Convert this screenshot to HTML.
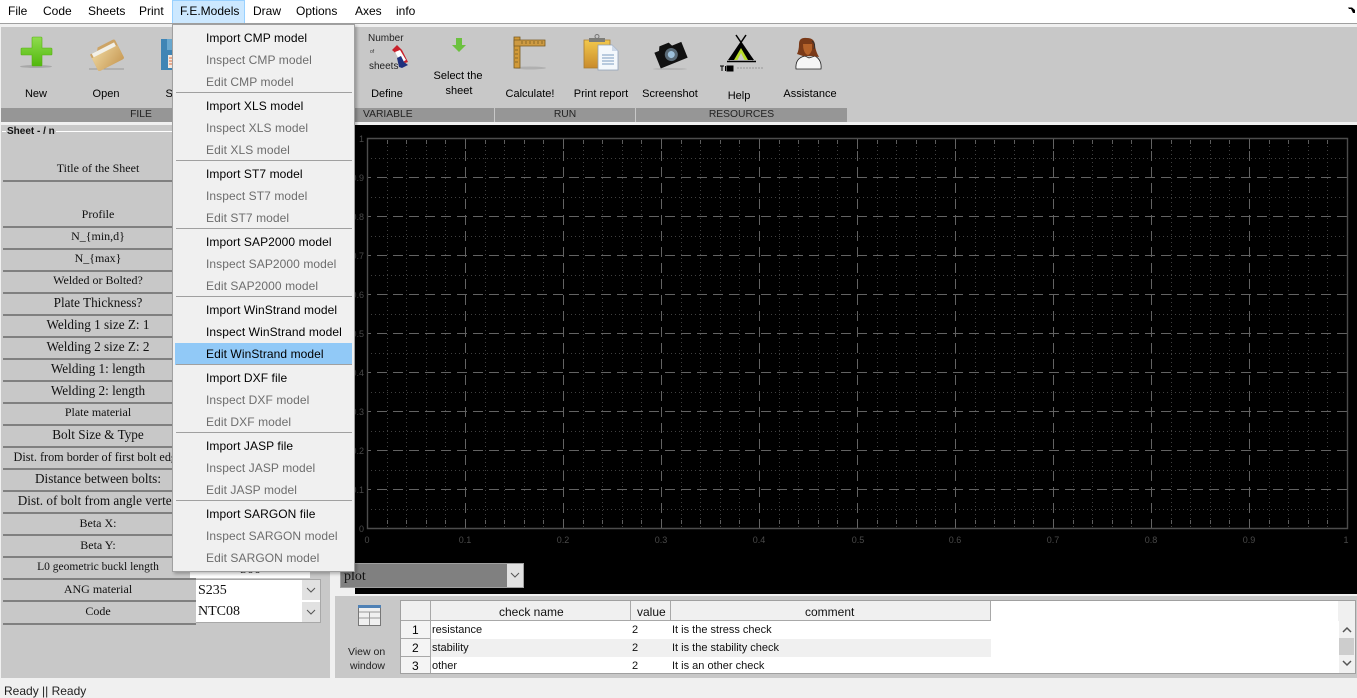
<!DOCTYPE html>
<html><head><meta charset="utf-8"><style>
html,body{margin:0;padding:0;width:1357px;height:697px;overflow:hidden;background:#f0f0f0;font-family:"Liberation Sans",sans-serif;color:#000}
div,span{position:absolute;white-space:nowrap}
.m{top:3px;font-size:12px;line-height:16px}
.t{font-size:11px;line-height:14px;transform:translateX(-50%);top:87px}
.b{font-size:10.3px;line-height:14px;top:108px;text-align:center;background:#969696;height:14px;color:#222}
.l{left:3px;width:190px;text-align:center;font:12px/14px "Liberation Serif",serif;color:#111}
.w{font-size:13.2px}
.u{left:3px;width:193px;height:2px;background:#808080}
.i{left:33px;font-size:12px;line-height:16px;color:#000;letter-spacing:.08px}
.d{color:#6d6d6d}
.s{left:3px;width:176px;height:1px;background:#a0a0a0}
.c{font-size:11px;line-height:14px;color:#111}
.h{width:1px;background:#a8a8a8}
.th{font-size:12px;line-height:14px;color:#111;top:605px}
</style></head><body>
<div style="left:0;top:0;width:1357px;height:23px;background:#fff"></div>
<div style="left:172px;top:0;width:71px;height:22px;background:#cce8ff;border:1px solid #99d1ff"></div>
<div class="m" style="left:8px">File</div><div class="m" style="left:43px">Code</div><div class="m" style="left:88px">Sheets</div><div class="m" style="left:139px">Print</div><div class="m" style="left:180px">F.E.Models</div><div class="m" style="left:253px">Draw</div><div class="m" style="left:296px">Options</div><div class="m" style="left:355px">Axes</div><div class="m" style="left:396px">info</div>
<svg style="position:absolute;left:1348px;top:6px" width="8" height="8"><path d="M0 1.5H4L7 4V7H5L3 3H1Z" fill="#000"/></svg>
<div style="left:0;top:23px;width:1357px;height:1px;background:#a0a0a0"></div>
<div style="left:1px;top:27px;width:1356px;height:81px;background:#c8c8c8"></div>
<div style="left:1px;top:108px;width:1356px;height:14px;background:#c8c8c8"></div>
<div class="b" style="left:1px;width:280px">FILE</div>
<div class="b" style="left:355px;width:139px;text-align:left;text-indent:8px">VARIABLE</div>
<div class="b" style="left:495px;width:140px">RUN</div>
<div class="b" style="left:636px;width:211px">RESOURCES</div>

<!-- toolbar icons -->
<svg style="position:absolute;left:0;top:25px" width="850" height="60" viewBox="0 25 850 60">
<defs>
<linearGradient id="g1" x1="0" y1="0" x2="0" y2="1"><stop offset="0" stop-color="#8fdc4f"/><stop offset="1" stop-color="#52b80c"/></linearGradient>
<linearGradient id="g2" x1="0" y1="0" x2="1" y2="1"><stop offset="0" stop-color="#e9cf96"/><stop offset="1" stop-color="#c99c58"/></linearGradient>
<linearGradient id="g3" x1="0" y1="0" x2="0" y2="1"><stop offset="0" stop-color="#f2c84c"/><stop offset="1" stop-color="#c98b2c"/></linearGradient>
</defs>
<ellipse cx="36" cy="66.500" rx="16" ry="1.500" fill="#a8a8a8"/>
<path d="M33 37H41Q42 37 42 38V48H51Q52 48 52 49V54Q52 55 51 55H42V65Q42 66 41 66H33Q32 66 32 65V55H22Q21 55 21 54V49Q21 48 22 48H32V38Q32 37 33 37Z" fill="url(#g1)" stroke="#56b013" stroke-width=".6"/>
<path d="M89 69H124" stroke="#999" stroke-width="1"/>
<g transform="rotate(-27 107 55)"><path d="M92 47H100L102 44H119Q121 44 121 46V64Q121 66 119 66H94Q92 66 92 64Z" fill="#cda466"/><path d="M94 47H119V54H94Z" fill="#f2f0e8"/><path d="M92 51H121V64Q121 66 119 66H94Q92 66 92 64Z" fill="url(#g2)"/></g>
<path d="M161 39H172V70H161Z" fill="#3f85b5"/><path d="M167 39H172V50H167Z" fill="#6aa8cf"/><path d="M168 55H172V68H168Z" fill="#f4e9e0"/><path d="M169 58H172M169 61H172M169 64H172" stroke="#e07040"/>
<!-- number of sheets arrows -->
<path d="M392 50L397 45L402 50L408 62L405 63L400 57Z" fill="#c8202a"/><path d="M395 52L400 50L406 60L401 63Z" fill="#fff"/><path d="M397 58L401 56L404 62L408 65L402 68L399 67Z" fill="#20307c"/>
<path d="M456 38H462V45H466L459 52L452 45H456Z" fill="#6cc13f"/>
<!-- ruler -->
<ellipse cx="530" cy="68" rx="16" ry="1.500" fill="#b0b0b0"/>
<path d="M514 37H520V68H514Z" fill="#d29a38" stroke="#7a5a20" stroke-width=".8"/><path d="M514 40H545V46H514Z" fill="#cd9a42" stroke="#7a5a20" stroke-width=".8"/><path d="M522 41V44M526 41V44M530 41V44M534 41V44M538 41V44M542 41V44M515 50H518M515 54H518M515 58H518M515 62H518" stroke="#8a6a28"/>
<!-- clipboard -->
<path d="M584 40H610V68H584Z" fill="url(#g3)" stroke="#a87c30" stroke-width=".8"/><path d="M589 38H605V42H589Z" fill="#7d7d78"/><circle cx="597" cy="36.500" r="2" fill="none" stroke="#777"/>
<path d="M598 45H612L618 51V70H598Z" fill="#f4f8fc" stroke="#8fa0b8" stroke-width=".8"/><path d="M612 45V51H618Z" fill="#cdd8e8"/><path d="M602 55H614M602 58H614M602 61H614M602 64H614" stroke="#7d9cc0"/>
<!-- camera -->
<ellipse cx="670" cy="69" rx="17" ry="1" fill="#b4b4b4"/>
<g transform="rotate(-22 670 54)"><path d="M656 47H661L663 43H673L675 47H685V64H656Z" fill="#111"/><circle cx="671" cy="55" r="6.500" fill="#5a6a76"/><circle cx="671" cy="55" r="3.500" fill="#9dc0da"/></g>
<!-- tipi -->
<path d="M736 35L753 60M746 35L729 60" stroke="#000" stroke-width="1.500" fill="none"/>
<path d="M741 43L754 60H728Z" fill="#000"/>
<path d="M741 48L734 60H748Z" fill="#b8dc28"/><path d="M741 53L737.500 60H744.500Z" fill="#c8c8c8"/>
<path d="M727 61.500H756" stroke="#000" stroke-width="1.500"/>
<path d="M720 66H724M722 66V71M725.500 66V71M727 66H733V71H727Z" stroke="#000" stroke-width="1" fill="#000"/><path d="M737 68H763" stroke="#b0b0b0" stroke-width="2" stroke-dasharray="2 1"/>
<!-- assistant -->
<path d="M796 69Q795 58 805 56L809 58L815 56Q822 60 821 69Z" fill="#f6f6f6" stroke="#222" stroke-width=".8"/>
<path d="M799 44Q799 37 807 38Q815 38 815 46Q816 52 819 57L812 56H803L797 54Q799 50 799 44Z" fill="#7a3a18"/>
<path d="M803 44H812V50Q809 57 806 54Q803 51 803 44Z" fill="#b4622a"/>
<path d="M812 41Q816 44 814 49" stroke="#333" fill="none"/>
</svg>
<div style="left:368px;top:33px;font-size:10px;line-height:12px;color:#222">Number</div>
<div style="left:370px;top:49px;font-size:5px;line-height:6px;color:#333">of</div>
<div style="left:369px;top:61px;font-size:10px;line-height:12px;color:#222">sheets</div>
<div class="t" style="left:36px">New</div><div class="t" style="left:106px">Open</div><div class="t" style="left:178px">Save</div><div class="t" style="left:387px">Define</div>
<div class="t" style="left:458px;top:69px">Select the</div><div class="t" style="left:459px;top:84px">sheet</div>
<div class="t" style="left:530px">Calculate!</div><div class="t" style="left:601px">Print report</div><div class="t" style="left:670px">Screenshot</div><div class="t" style="left:739px;top:89px">Help</div><div class="t" style="left:810px">Assistance</div>

<!-- left panel -->
<div style="left:1px;top:125px;width:329px;height:553px;background:#c8c8c8"></div>
<div style="left:2px;top:131px;width:328px;height:1px;background:#fff"></div>
<div style="left:6px;top:126px;background:#c8c8c8;padding:0 1px;font:bold 10px/11px 'Liberation Sans',sans-serif;color:#111">Sheet - / n</div>
<div class="l" style="top:161px">Title of the Sheet</div><div class="u" style="top:180px"></div>
<div class="l" style="top:207px">Profile</div><div class="u" style="top:226px"></div>
<div class="l" style="top:229px">N_{min,d}</div><div class="u" style="top:248px"></div>
<div class="l" style="top:251px">N_{max}</div><div class="u" style="top:270px"></div>
<div class="l" style="top:273px">Welded or Bolted?</div><div class="u" style="top:292px"></div>
<div class="l w" style="top:296px">Plate Thickness?</div><div class="u" style="top:314px"></div>
<div class="l w" style="top:318px">Welding 1 size Z: 1</div><div class="u" style="top:336px"></div>
<div class="l w" style="top:340px">Welding 2 size Z: 2</div><div class="u" style="top:358px"></div>
<div class="l w" style="top:362px">Welding 1: length</div><div class="u" style="top:380px"></div>
<div class="l w" style="top:384px">Welding 2: length</div><div class="u" style="top:402px"></div>
<div class="l" style="top:405px">Plate material</div><div class="u" style="top:424px"></div>
<div class="l w" style="top:428px">Bolt Size &amp; Type</div><div class="u" style="top:446px"></div>
<div class="l" style="top:450px;font-size:12.200px">Dist. from border of first bolt edge</div><div class="u" style="top:468px"></div>
<div class="l w" style="top:472px">Distance between bolts:</div><div class="u" style="top:490px"></div>
<div class="l w" style="top:494px">Dist. of bolt from angle vertex</div><div class="u" style="top:512px"></div>
<div class="l" style="top:516px">Beta X:</div><div class="u" style="top:534px"></div>
<div class="l" style="top:538px">Beta Y:</div><div class="u" style="top:556px"></div>
<div class="l" style="top:560px;font-size:11.500px">L0 geometric buckl length</div><div class="u" style="top:578px"></div>
<div class="l" style="top:582px">ANG material</div><div class="u" style="top:600px"></div>
<div class="l" style="top:604px">Code</div><div class="u" style="top:623px"></div>
<div style="left:190px;top:556px;width:120px;height:22px;background:#fff"></div>
<div style="left:240px;top:561px;font:14px/17px 'Liberation Serif',serif;color:#111">500</div>
<div style="left:196px;top:579px;width:124px;height:21px;background:#fff;border:1px solid #a8a8a8;border-left:0"></div>
<div style="left:302px;top:580px;width:18px;height:20px;background:#e1e1e1"></div>
<div style="left:198px;top:582px;font:14px/17px 'Liberation Serif',serif;color:#111">S235</div>
<div style="left:196px;top:601px;width:124px;height:21px;background:#fff;border:1px solid #a8a8a8;border-left:0;border-top:0"></div>
<div style="left:302px;top:602px;width:18px;height:20px;background:#e1e1e1"></div>
<div style="left:198px;top:603px;font:14px/17px 'Liberation Serif',serif;color:#111">NTC08</div>
<svg style="position:absolute;left:306px;top:587px" width="10" height="30"><path d="M1 1L5 5L9 1M1 23L5 27L9 23" fill="none" stroke="#555"/></svg>

<!-- plot -->
<div style="left:355px;top:125px;width:1002px;height:469px;background:#000"></div>
<svg style="position:absolute;left:355px;top:125px" width="1002" height="469" viewBox="355 125 1002 469">
<defs>
<pattern id="mv" patternUnits="userSpaceOnUse" x="367" y="138" width="98" height="4"><rect x="20" width="1" height="1" fill="#404040"/><rect x="39" width="1" height="1" fill="#404040"/><rect x="59" width="1" height="1" fill="#404040"/><rect x="78" width="1" height="1" fill="#404040"/></pattern>
<pattern id="mh" patternUnits="userSpaceOnUse" x="367" y="138" width="4" height="39"><rect y="20" width="1" height="1" fill="#404040"/></pattern>
<pattern id="Mv" patternUnits="userSpaceOnUse" x="367" y="138" width="98" height="16"><rect x="0" y="0" width="1" height="7" fill="#636363"/><rect x="0" y="13" width="1" height="3" fill="#636363"/></pattern>
<pattern id="Mh" patternUnits="userSpaceOnUse" x="367" y="138" width="16" height="39"><rect x="0" y="0" width="4" height="1" fill="#636363"/><rect x="10" y="0" width="6" height="1" fill="#636363"/></pattern>
<pattern id="tk" patternUnits="userSpaceOnUse" x="367" y="0" width="98" height="10"><rect x="20" width="1" height="4" fill="#5c5c5c"/><rect x="39" width="1" height="4" fill="#5c5c5c"/><rect x="59" width="1" height="4" fill="#5c5c5c"/><rect x="78" width="1" height="4" fill="#5c5c5c"/><rect x="0" width="1" height="9" fill="#636363"/></pattern>
</defs>
<rect x="367" y="138" width="980" height="390" fill="url(#mv)"/>
<rect x="367" y="138" width="980" height="390" fill="url(#mh)"/>
<rect x="368" y="139" width="980" height="389" fill="url(#Mv)"/>
<rect x="368" y="170" width="979" height="358" fill="url(#Mh)"/>
<rect x="368" y="140" width="978" height="10" fill="url(#tk)"/>
<rect x="368" y="520" width="978" height="10" fill="url(#tk)"/>
<path d="M367.500 138.500H1347.500V528.500H367.500Z" fill="none" stroke="#4c4c4c" stroke-width="1.400"/>
<g font-family="Liberation Sans" font-size="9" fill="#4a4a4a" text-anchor="end">
<text x="364" y="142">1</text><text x="364" y="181">0.9</text><text x="364" y="220">0.8</text><text x="364" y="259">0.7</text><text x="364" y="298">0.6</text><text x="364" y="337">0.5</text><text x="364" y="376">0.4</text><text x="364" y="415">0.3</text><text x="364" y="454">0.2</text><text x="364" y="493">0.1</text><text x="364" y="532">0</text></g>
<g font-family="Liberation Sans" font-size="9" fill="#4a4a4a" text-anchor="middle"><text x="367" y="543">0</text><text x="465" y="543">0.1</text><text x="563" y="543">0.2</text><text x="661" y="543">0.3</text><text x="759" y="543">0.4</text><text x="858" y="543">0.5</text><text x="955" y="543">0.6</text><text x="1053" y="543">0.7</text><text x="1151" y="543">0.8</text><text x="1249" y="543">0.9</text><text x="1346" y="543">1</text></g>
</svg>
<div style="left:340px;top:563px;width:182px;height:23px;background:#808080;border:1px solid #a0a0a0"></div>
<div style="left:507px;top:564px;width:16px;height:23px;background:#e1e1e1"></div>
<svg style="position:absolute;left:510px;top:572px" width="10" height="8"><path d="M1 1L5 5L9 1" fill="none" stroke="#555"/></svg>
<div style="left:344px;top:568px;font:14px/17px 'Liberation Serif',serif;color:#111">plot</div>

<!-- bottom panel -->
<div style="left:335px;top:596px;width:1022px;height:82px;background:#c8c8c8"></div>
<svg style="position:absolute;left:357px;top:604px" width="26" height="24"><rect x="1.500" y="1.500" width="22" height="20" fill="#f0f0f0" stroke="#777"/><rect x="1" y="1" width="23" height="3" fill="#4f81b5"/><path d="M2 8H23M2 14H23M12.500 8V21" stroke="#999"/></svg>
<div style="left:348px;top:646px;font-size:10.500px;line-height:13px;color:#222">View on</div>
<div style="left:350px;top:660px;font-size:10.500px;line-height:13px;color:#222">window</div>
<div style="left:400px;top:600px;width:954px;height:72px;background:#fff;border:1px solid #a0a0a0"></div>
<div style="left:401px;top:601px;width:590px;height:19px;background:#f0f0f0;border-bottom:1px solid #a8a8a8"></div>
<div style="left:431px;top:639px;width:560px;height:18px;background:#f0f0f0"></div>
<div style="left:401px;top:621px;width:29px;height:52px;background:#f4f4f4"></div>
<div class="h" style="left:430px;top:601px;height:72px"></div><div class="h" style="left:630px;top:601px;height:20px"></div><div class="h" style="left:670px;top:601px;height:20px"></div><div class="h" style="left:990px;top:601px;height:20px"></div>
<div style="left:401px;top:638px;width:29px;height:1px;background:#a8a8a8"></div><div style="left:401px;top:656px;width:29px;height:1px;background:#a8a8a8"></div>
<div class="th" style="left:499px">check name</div><div class="th" style="left:637px">value</div><div class="th" style="left:805px">comment</div>
<div style="left:412px;top:623px;font-size:12px;line-height:14px">1</div><div style="left:412px;top:641px;font-size:12px;line-height:14px">2</div><div style="left:412px;top:659px;font-size:12px;line-height:14px">3</div>
<div class="c" style="left:432px;top:623px">resistance</div><div class="c" style="left:432px;top:641px">stability</div><div class="c" style="left:432px;top:659px">other</div>
<div class="c" style="left:632px;top:623px">2</div><div class="c" style="left:632px;top:641px">2</div><div class="c" style="left:632px;top:659px">2</div>
<div class="c" style="left:672px;top:623px">It is the stress check</div><div class="c" style="left:672px;top:641px">It is the stability check</div><div class="c" style="left:672px;top:659px">It is an other check</div>
<div style="left:1338px;top:601px;width:17px;height:20px;background:#f0f0f0"></div>
<div style="left:1339px;top:621px;width:16px;height:52px;background:#f0f0f0"></div>
<div style="left:1339px;top:638px;width:15px;height:17px;background:#cdcdcd"></div>
<svg style="position:absolute;left:1342px;top:626px" width="10" height="44"><path d="M1 6L5 2L9 6M1 35L5 39L9 35" fill="none" stroke="#555" stroke-width="1.500"/></svg>

<div style="left:4px;top:684px;font-size:12px;line-height:14px;color:#222">Ready || Ready</div>

<!-- dropdown menu -->
<div style="left:172px;top:24px;width:181px;height:546px;background:#f0f0f0;border:1px solid #a0a0a0;box-shadow:2px 2px 3px rgba(0,0,0,.25)">
<div style="left:2px;top:318px;width:177px;height:22px;background:#91c9f7"></div>
<div class="i" style="top:5px">Import CMP model</div><div class="i d" style="top:27px">Inspect CMP model</div><div class="i d" style="top:49px">Edit CMP model</div><div class="s" style="top:67px"></div>
<div class="i" style="top:73px">Import XLS model</div><div class="i d" style="top:95px">Inspect XLS model</div><div class="i d" style="top:117px">Edit XLS model</div><div class="s" style="top:135px"></div>
<div class="i" style="top:141px">Import ST7 model</div><div class="i d" style="top:163px">Inspect ST7 model</div><div class="i d" style="top:185px">Edit ST7 model</div><div class="s" style="top:203px"></div>
<div class="i" style="top:209px">Import SAP2000 model</div><div class="i d" style="top:231px">Inspect SAP2000 model</div><div class="i d" style="top:253px">Edit SAP2000 model</div><div class="s" style="top:271px"></div>
<div class="i" style="top:277px">Import WinStrand model</div><div class="i" style="top:299px">Inspect WinStrand model</div><div class="i" style="top:321px">Edit WinStrand model</div><div class="s" style="top:339px"></div>
<div class="i" style="top:345px">Import DXF file</div><div class="i d" style="top:367px">Inspect DXF model</div><div class="i d" style="top:389px">Edit DXF model</div><div class="s" style="top:407px"></div>
<div class="i" style="top:413px">Import JASP file</div><div class="i d" style="top:435px">Inspect JASP model</div><div class="i d" style="top:457px">Edit JASP model</div><div class="s" style="top:475px"></div>
<div class="i" style="top:481px">Import SARGON file</div><div class="i d" style="top:503px">Inspect SARGON model</div><div class="i d" style="top:525px">Edit SARGON model</div>
</div>
</body></html>
